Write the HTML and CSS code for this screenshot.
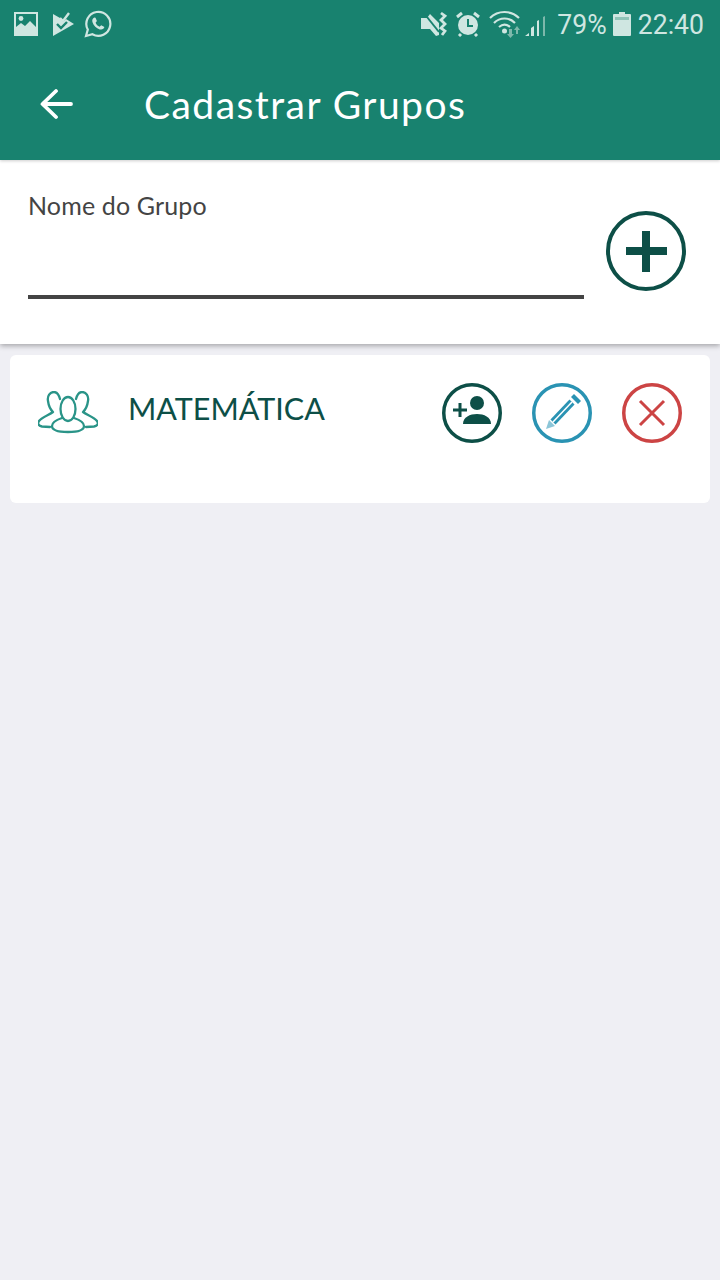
FILE: index.html
```html
<!DOCTYPE html>
<html lang="pt">
<head>
  <meta charset="UTF-8" />
  <title>Cadastrar Grupos</title>
  <link rel="stylesheet" href="styles.css">
</head>
<body>

<header class="header">
  <div class="status-bar">
    <div class="status-left">
      <svg width="24" height="24" viewBox="0 0 24 24">
        <path fill="#cfe6e1" fill-rule="evenodd" d="M0 0h24v24H0z M2 2v13l5-4 4 3 5-5 6 6V2z"/>
        <circle cx="7" cy="6.500" r="2.400" fill="#cfe6e1"/>
      </svg>
      <svg class="st-task" width="22" height="24" viewBox="0 0 22 24">
        <path fill="#cfe6e1" d="M1 2l7 4 3 4 3-3 8 5L1 24z"/>
        <path fill="none" stroke="#cfe6e1" stroke-width="2.400" d="M8 6l3 3 6-8"/>
        <path fill="none" stroke="#18826f" stroke-width="2.400" d="M5 12l4 4 6-6"/>
      </svg>
      <svg class="st-wa" width="28" height="28" viewBox="0 0 28 28">
        <path fill="none" stroke="#cfe6e1" stroke-width="2.200" d="M2 26l1.800-6.400A12 12 0 1 1 8.400 24.300z"/>
        <path fill="#cfe6e1" d="M10.300 7.500c-1.500.6-2.600 2.500-1.800 4.800 1.200 3.400 3.800 6 7.200 7.100 2.400.7 4.300-.5 4.700-2.300l-3.200-1.900-1.600 1.500c-1.800-.7-3.300-2.300-4-4l1.300-1.600-1.400-3.400z"/>
      </svg>
    </div>
    <div class="status-right">
      <svg width="28" height="26" viewBox="0 0 28 26">
        <path fill="#cfe6e1" d="M1 7h6l3-4 9 9v12l-3 1-6-7H1z"/>
        <path stroke="#18826f" stroke-width="2" d="M3 1l16 20"/>
        <path fill="none" stroke="#cfe6e1" stroke-width="2.800" d="M21 2l4 3-4 4 4 4-4 4 4 3-3 4"/>
      </svg>
      <svg class="st-alarm" width="26" height="26" viewBox="0 0 26 26">
        <circle cx="13" cy="14" r="10" fill="#cfe6e1"/>
        <path fill="none" stroke="#18826f" stroke-width="2" d="M13 8v7h5"/>
        <path stroke="#cfe6e1" stroke-width="3" d="M2 6l5-4M24 6l-5-4M6 23l-2 2M20 23l2 2"/>
      </svg>
      <svg class="st-net" width="60" height="30" viewBox="0 0 60 30">
        <path fill="none" stroke="#cfe6e1" stroke-width="2.200" d="M1 9C9 1 22 1 30 9M5 14c6-6 15-6 21 0M10 18c3.500-3 7.500-3 11 0"/>
        <circle cx="15.500" cy="22" r="2.500" fill="#cfe6e1"/>
        <path fill="#7db8ab" d="M20 20h3v5h2l-3.500 4-3.500-4h2zM28 17l3 4h-2v4h-2v-4h-2z"/>
        <path fill="#cfe6e1" d="M36 27l4-3v3zM42 27v-8l3-2v10zM48 27V12l2-1v16z"/>
        <path fill="#7db8ab" d="M54 27V8l2-1v20z"/>
      </svg>
      <span class="st-text st-pct">79%</span>
      <svg width="18" height="24" viewBox="0 0 18 24">
        <path fill="#cfe6e1" d="M6 0h6v2h5a1 1 0 0 1 1 1v20a1 1 0 0 1-1 1H1a1 1 0 0 1-1-1V3a1 1 0 0 1 1-1h5z"/>
        <path fill="#8fc4b8" d="M2 5h14v3H2z"/>
      </svg>
      <span class="st-text st-time">22:40</span>
    </div>
  </div>
  <div class="toolbar">
    <svg class="back" width="34" height="32" viewBox="0 0 34 32">
      <path fill="none" stroke="#fff" stroke-width="3.800" stroke-linecap="round" stroke-linejoin="round" d="M31 16H3M16 3L2.500 16 16 29"/>
    </svg>
    <h1 class="title">Cadastrar Grupos</h1>
  </div>
</header>

<section class="form-panel">
  <div class="field">
    <label class="field-label" for="grupo">Nome do Grupo</label>
    <input class="field-input" type="text" id="grupo" />
  </div>
  <svg class="add-btn" width="80" height="80" viewBox="0 0 80 80">
    <circle cx="40" cy="40" r="38" fill="none" stroke="#0d4f47" stroke-width="4"/>
    <path fill="none" stroke="#0d4f47" stroke-width="8" d="M40 20v41M20 40h41"/>
  </svg>
</section>

<section class="card">
  <svg class="group-icon" width="60" height="44" viewBox="0 0 60 44">
    <g fill="none" stroke="#2a9488" stroke-width="2.300" stroke-linecap="round" stroke-linejoin="round">
      <path d="M22 8c-1-4-3-7-6-7-4 0-7 4-6 9 .5 4 2 8 5 11-4 3-11 5-14 9-2 3 0 5 3 5.500l8 .5"/>
      <path d="M38 8c1-4 3-7 6-7 4 0 7 4 6 9-.5 4-2 8-5 11 4 3 11 5 14 9 2 3 0 5-3 5.500l-8 .5"/>
      <ellipse cx="30" cy="18" rx="7.500" ry="12"/>
      <path d="M24 27c-6 2-10 4-10 8 0 4 4 6 16 6s16-2 16-6c0-4-4-6-10-8"/>
    </g>
  </svg>
  <span class="group-name">MATEMÁTICA</span>
  <div class="actions">
    <svg width="60" height="60" viewBox="0 0 60 60">
      <circle cx="30" cy="30" r="28.250" fill="none" stroke="#0d4f47" stroke-width="3.500"/>
      <circle cx="35" cy="20" r="7" fill="#0d4f47"/>
      <path fill="#0d4f47" d="M21 41c0-7 7-10 14-10s14 3 14 10z"/>
      <path fill="none" stroke="#0d4f47" stroke-width="3" d="M18 20v14M11 27h14"/>
    </svg>
    <svg width="60" height="60" viewBox="0 0 60 60">
      <circle cx="30" cy="30" r="28.250" fill="none" stroke="#2a93b3" stroke-width="3.500"/>
      <path fill="none" stroke="#2a93b3" stroke-width="7" d="M21 39l19-20"/>
      <path fill="#8cc6d8" d="M14 46l3-9 6 6z"/>
      <path fill="#2a93b3" d="M39 14l3-3 7 7-3 3z"/>
      <path fill="none" stroke="#fff" stroke-width="1.500" d="M21 39l19-20"/>
    </svg>
    <svg width="60" height="60" viewBox="0 0 60 60">
      <circle cx="30" cy="30" r="28.250" fill="none" stroke="#cc4444" stroke-width="3.500"/>
      <path fill="none" stroke="#cc4444" stroke-width="3" d="M18 18l24 24M42 18L18 42"/>
    </svg>
  </div>
</section>

</body>
</html>
```

FILE: styles.css
```css
* {
  box-sizing: border-box;
}
body {
  margin: 0;
  height: 1280px;
  overflow: hidden;
  background: #efeff4;
  font-family: Lato, "Open Sans", sans-serif;
}
.header {
  background: #18826f;
  height: 160px;
  position: relative;
  z-index: 2;
  box-shadow: 0 1px 3px rgba(0, 0, 0, 0.2);
}
.status-bar {
  height: 48px;
  padding: 0 14px;
  display: flex;
  justify-content: space-between;
  align-items: center;
}
.status-left {
  display: flex;
  align-items: center;
}
.st-task {
  margin-left: 14px;
}
.st-wa {
  margin-left: 10px;
}
.status-right {
  display: flex;
  align-items: center;
  gap: 5px;
}
.st-alarm {
  margin-left: 2px;
}
.st-net {
  margin-left: 3px;
}
.st-pct {
  margin-left: 2px;
}
.st-text {
  font-family: Roboto, sans-serif;
  font-size: 28px;
  color: #cfe6e1;
  transform: scaleX(0.95);
}
.toolbar {
  height: 112px;
  padding: 0 0 0 40px;
  display: flex;
  align-items: center;
}
.title {
  margin: 0 0 0 70px;
  font-size: 39px;
  font-weight: 400;
  letter-spacing: 1.45px;
  color: #fff;
}
.form-panel {
  background: #fff;
  height: 184px;
  padding: 31px 34px 0 28px;
  display: flex;
  align-items: flex-start;
  justify-content: space-between;
  position: relative;
  z-index: 1;
  box-shadow: 0 2px 5px rgba(0, 0, 0, 0.3);
}
.field {
  width: 556px;
}
.field-label {
  display: block;
  font-size: 25px;
  line-height: 28px;
  letter-spacing: 0.15px;
  color: #444;
}
.field-input {
  display: block;
  width: 100%;
  height: 80px;
  border: 0;
  border-bottom: 4px solid #444;
  background: transparent;
  outline: none;
}
.add-btn {
  margin-top: 20px;
}
.card {
  margin: 11px 10px 0;
  height: 148px;
  padding: 28px 28px 0 28px;
  background: #fff;
  border-radius: 6px;
  display: flex;
  align-items: flex-start;
}
.group-icon {
  margin-top: 8px;
}
.group-name {
  margin: 6px 0 0 30px;
  font-size: 30.5px;
  line-height: 38px;
  color: #0d4f47;
}
.actions {
  margin-left: auto;
  display: flex;
  gap: 30px;
}
```
